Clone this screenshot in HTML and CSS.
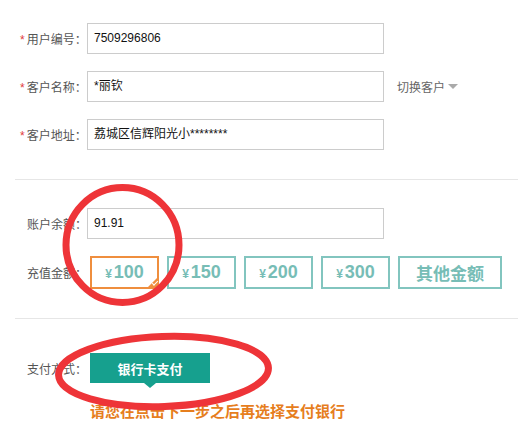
FILE: index.html
```html
<!DOCTYPE html>
<html lang="zh-CN">
<head>
  <meta charset="UTF-8">
  <title>充值缴费</title>
  <link rel="stylesheet" href="styles.css">
</head>
<body>

<div class="page">
  <!-- Customer info -->
  <section class="block info">
    <div class="row">
      <label class="label"><span class="req">*</span>用户编号：</label>
      <div class="field">7509296806</div>
    </div>
    <div class="row">
      <label class="label"><span class="req">*</span>客户名称：</label>
      <div class="field">*丽钦</div>
      <a class="switch">切换客户 <span class="caret"></span></a>
    </div>
    <div class="row">
      <label class="label"><span class="req">*</span>客户地址：</label>
      <div class="field">荔城区信辉阳光小********</div>
    </div>
  </section>

  <hr class="divider">

  <!-- Recharge -->
  <section class="block recharge">
    <div class="row">
      <label class="label">账户余额：</label>
      <div class="field">91.91</div>
    </div>
    <div class="row">
      <label class="label">充值金额：</label>
      <div class="amounts">
        <button class="amount selected"><small>¥</small>100<span class="tick"></span></button>
        <button class="amount"><small>¥</small>150</button>
        <button class="amount"><small>¥</small>200</button>
        <button class="amount"><small>¥</small>300</button>
        <button class="amount other">其他金额</button>
      </div>
    </div>
  </section>

  <hr class="divider">

  <!-- Payment -->
  <section class="block pay">
    <div class="row">
      <label class="label">支付方式：</label>
      <button class="pay-btn">银行卡支付</button>
    </div>
    <p class="notice">请您在点击下一步之后再选择支付银行</p>
  </section>

  <!-- hand-drawn marks on top of the screenshot -->
  <svg class="marks" width="518" height="441" viewBox="0 0 518 441">
    <ellipse cx="122.5" cy="245" rx="56.5" ry="57.5" />
    <ellipse cx="163.5" cy="371.5" rx="105" ry="35" transform="rotate(-2 163.5 371.5)" />
  </svg>
</div>

</body>
</html>
```

FILE: styles.css
```css
body {
  margin: 0;
  background-color: #fff;
  font-family: "Liberation Sans", "Noto Sans CJK SC", sans-serif;
  font-size: 12px;
  color: #555;
}

.page {
  position: relative;
  width: 518px;
  height: 441px;
  overflow: hidden;
}

.block {
  padding-left: 27px;
}

.info {
  padding-top: 23px;
}

.row {
  display: flex;
  align-items: center;
  margin-bottom: 17px;
}

.block .row:last-child {
  margin-bottom: 0;
}

.label {
  width: 60px;
  flex-shrink: 0;
  font-family: "Noto Sans CJK SC", sans-serif;
  font-size: 12px;
  color: #555;
  white-space: nowrap;
}

.req {
  color: #e23b3b;
  margin-left: -7px;
  margin-right: 2px;
  font-family: "Liberation Sans", sans-serif;
}

.field {
  width: 289px;
  height: 29px;
  line-height: 29px;
  padding-left: 6px;
  border: 1px solid #ccc;
  color: #111;
  font-size: 12px;
}

.switch {
  margin-left: 13px;
  font-family: "Noto Sans CJK SC", sans-serif;
  color: #666;
  display: flex;
  align-items: center;
  gap: 3px;
}

.caret {
  width: 0;
  height: 0;
  border-left: 5px solid transparent;
  border-right: 5px solid transparent;
  border-top: 5px solid #aaa;
}

.divider {
  border: none;
  border-top: 1px solid #e6e6e6;
  margin: 29px 0 28px 15px;
}

.amounts {
  display: flex;
  gap: 8px;
  margin-left: 3px;
}

.amount {
  position: relative;
  width: 69px;
  height: 33px;
  padding: 0;
  margin: 0;
  background: #fff;
  border: 2px solid #82c5bf;
  color: #77bdb6;
  font-family: "Liberation Sans", "Noto Sans CJK SC", sans-serif;
  font-size: 18px;
  font-weight: bold;
  cursor: pointer;
}

.amount small {
  font-size: 12px;
  margin-right: 2px;
}

.amount.selected {
  border-color: #ef8e3e;
}

.amount.other {
  width: 104px;
  font-family: "Noto Sans CJK SC", sans-serif;
  font-size: 17px;
}

.tick {
  position: absolute;
  right: -2px;
  bottom: -2px;
  width: 0;
  height: 0;
  border-left: 13px solid transparent;
  border-bottom: 13px solid #ef8e3e;
}

.tick::after {
  content: "";
  position: absolute;
  left: -7px;
  top: 5px;
  width: 5px;
  height: 2px;
  border-left: 1.5px solid #fff;
  border-bottom: 1.5px solid #fff;
  transform: rotate(-45deg);
}

.pay {
  padding-top: 6px;
}

.pay-btn {
  position: relative;
  width: 120px;
  height: 30px;
  border: none;
  margin: 0 0 0 3px;
  padding: 0;
  background-color: #16a08e;
  color: #fff;
  font-family: "Noto Sans CJK SC", sans-serif;
  font-size: 13px;
  font-weight: bold;
}

.pay-btn::after {
  content: "";
  position: absolute;
  left: 54px;
  bottom: -5px;
  border-left: 6px solid transparent;
  border-right: 6px solid transparent;
  border-top: 5px solid #16a08e;
}

.notice {
  margin: 11px 0 0 63px;
  font-family: "Noto Sans CJK SC", sans-serif;
  font-size: 15px;
  font-weight: bold;
  color: #e67e1e;
  line-height: 22px;
}

.marks {
  position: absolute;
  left: 0;
  top: 0;
  pointer-events: none;
}

.marks ellipse {
  fill: none;
  stroke: #ee3438;
  stroke-width: 7;
}
```
